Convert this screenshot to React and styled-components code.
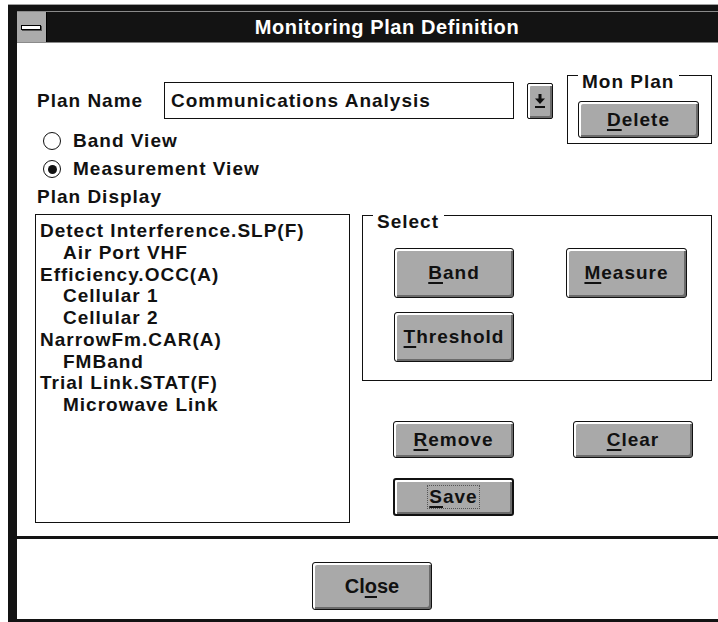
import React from "react";
import styled, { createGlobalStyle } from "styled-components";

const planLines = [
  { text: "Detect Interference.SLP(F)", child: false },
  { text: "Air Port VHF", child: true },
  { text: "Efficiency.OCC(A)", child: false },
  { text: "Cellular 1", child: true },
  { text: "Cellular 2", child: true },
  { text: "NarrowFm.CAR(A)", child: false },
  { text: "FMBand", child: true },
  { text: "Trial Link.STAT(F)", child: false },
  { text: "Microwave Link", child: true },
];

export default function App() {
  return (
    <>
      <GlobalStyle />
      <Window>
        <TitleBar>
          <SysMenu>
            <SysBar />
          </SysMenu>
          <Title>Monitoring Plan Definition</Title>
        </TitleBar>

        <Content>
          <TopSection>
            <LeftTop>
              <PlanNameRow>
                <Label>Plan Name</Label>
                <NameBox>Communications Analysis</NameBox>
                <DropButton>
                  <svg width="12" height="16" viewBox="0 0 12 16">
                    <rect x="4.5" y="1" width="3" height="5" fill="#111" />
                    <polygon points="1,5.5 11,5.5 6,11" fill="#111" />
                    <rect x="1" y="13" width="10" height="2" fill="#111" />
                  </svg>
                </DropButton>
              </PlanNameRow>
              <RadioList>
                <RadioRow>
                  <Radio />
                  Band View
                </RadioRow>
                <RadioRow>
                  <Radio $checked />
                  Measurement View
                </RadioRow>
              </RadioList>
              <SectionLabel>Plan Display</SectionLabel>
            </LeftTop>

            <MonPlanGroup>
              <Legend>Mon Plan</Legend>
              <Button $w={121} $h={37}>
                <u>D</u>elete
              </Button>
            </MonPlanGroup>
          </TopSection>

          <BottomSection>
            <ListBox>
              {planLines.map((line) => (
                <ListLine key={line.text} $child={line.child}>
                  {line.text}
                </ListLine>
              ))}
            </ListBox>

            <RightPanel>
              <SelectGroup>
                <Legend>Select</Legend>
                <Button $h={50}>
                  <u>B</u>and
                </Button>
                <Button $w={121} $h={50}>
                  <u>M</u>easure
                </Button>
                <Button $h={50}>
                  <u>T</u>hreshold
                </Button>
              </SelectGroup>

              <ActionGrid>
                <Button $w={121} $h={37}>
                  <u>R</u>emove
                </Button>
                <Button $h={37}>
                  <u>C</u>lear
                </Button>
                <Button $w={121} $h={38} $default>
                  <Focus>
                    <u>S</u>ave
                  </Focus>
                </Button>
              </ActionGrid>
            </RightPanel>
          </BottomSection>
        </Content>

        <Footer>
          <CloseButton>
            Cl<u>o</u>se
          </CloseButton>
        </Footer>
      </Window>
    </>
  );
}

const GlobalStyle = createGlobalStyle`
  html, body {
    margin: 0;
    padding: 0;
    background: #fff;
    overflow: hidden;
  }
  body {
    font-family: "Liberation Sans", Arial, sans-serif;
  }
`;

/* the dialog runs on past the right edge of the shot, so its right frame is not drawn */
const Window = styled.div`
  margin: 4px 0 0 8px;
  width: 701px;
  border-top: 1px solid #a0a0a0;
  background: #131313;
  padding: 6px 0 10px 9px;
`;

const TitleBar = styled.div`
  display: flex;
  height: 30px;
  border-top: 1px solid #8a8a8a;
  border-bottom: 1px solid #8a8a8a;
  background: #131313;
`;

const SysMenu = styled.div`
  width: 29px;
  flex: none;
  background: #ababab;
  border-right: 1px solid #000;
  display: flex;
  align-items: center;
  justify-content: center;
`;

const SysBar = styled.span`
  display: block;
  width: 18px;
  height: 3px;
  background: #fff;
  border: 1px solid #000;
  box-shadow: 1px 1px 0 #555;
  margin-left: -2px;
`;

const Title = styled.div`
  flex: 1;
  padding-left: 9px;
  text-align: center;
  color: #fff;
  font: bold 20px/30px "Liberation Sans", Arial, sans-serif;
  letter-spacing: 0.6px;
  white-space: nowrap;
`;

const Content = styled.main`
  height: 493px;
  box-sizing: border-box;
  padding: 0 6px 0 18px;
  background: #fff;
  color: #111;
  font: bold 19px/22px "Liberation Sans", Arial, sans-serif;
  letter-spacing: 1px;
  display: flex;
  flex-direction: column;
`;

const TopSection = styled.div`
  display: flex;
  justify-content: space-between;
  align-items: flex-start;
`;

const LeftTop = styled.div`
  display: flex;
  flex-direction: column;
  padding-top: 39px;
`;

const PlanNameRow = styled.div`
  display: flex;
  align-items: center;
  height: 37px;
`;

const Label = styled.span`
  width: 127px;
  margin-left: 2px;
  white-space: nowrap;
`;

const NameBox = styled.div`
  width: 350px;
  height: 37px;
  box-sizing: border-box;
  border: 1px solid #111;
  padding-left: 6px;
  display: flex;
  align-items: center;
  white-space: nowrap;
`;

const DropButton = styled.div`
  margin-left: 13px;
  width: 26px;
  height: 36px;
  box-sizing: border-box;
  border: 1px solid #111;
  border-radius: 2px;
  background: #a9a9a9;
  box-shadow: inset 2px 2px 0 #fff, inset -2px -2px 0 #6b6b6b;
  display: flex;
  align-items: center;
  justify-content: center;
`;

const RadioList = styled.div`
  margin-top: 8px;
  display: flex;
  flex-direction: column;
`;

const RadioRow = styled.div`
  height: 28px;
  display: flex;
  align-items: center;
  gap: 12px;
  padding-left: 8px;
  white-space: nowrap;
`;

const Radio = styled.span`
  width: 18px;
  height: 18px;
  box-sizing: border-box;
  border: 1.5px solid #111;
  border-radius: 50%;
  background: #fff;
  display: flex;
  align-items: center;
  justify-content: center;
  &::after {
    content: "";
    display: ${(p) => (p.$checked ? "block" : "none")};
    width: 9px;
    height: 9px;
    border-radius: 50%;
    background: #111;
  }
`;

const SectionLabel = styled.div`
  height: 28px;
  line-height: 28px;
  padding-left: 2px;
`;

const Group = styled.div`
  position: relative;
  box-sizing: border-box;
  border: 1px solid #111;
`;

const Legend = styled.span`
  position: absolute;
  top: -5px;
  left: 10px;
  padding: 0 5px 0 4px;
  background: #fff;
  line-height: 22px;
  white-space: nowrap;
`;

const MonPlanGroup = styled(Group)`
  margin-top: 32px;
  width: 145px;
  height: 69px;
  display: flex;
  align-items: flex-end;
  padding: 0 0 5px 10px;
`;

const Button = styled.button`
  width: ${(p) => p.$w || 120}px;
  height: ${(p) => p.$h || 37}px;
  box-sizing: border-box;
  padding: 0;
  border: ${(p) => (p.$default ? "2px" : "1px")} solid #111;
  border-radius: 3px;
  background: #a9a9a9;
  box-shadow: inset 2px 2px 0 #fff, inset -2px -2px 0 #6b6b6b;
  color: #111;
  font: bold 19px/22px "Liberation Sans", Arial, sans-serif;
  letter-spacing: 1px;
  display: flex;
  align-items: center;
  justify-content: center;

  u {
    text-decoration-thickness: 2px;
    text-underline-offset: 3px;
  }
`;

const Focus = styled.span`
  outline: 1px dotted #555;
  padding: 0 1px;
`;

const BottomSection = styled.div`
  margin-top: 3px;
  display: flex;
  align-items: flex-start;
`;

const ListBox = styled.div`
  width: 315px;
  height: 309px;
  box-sizing: border-box;
  border: 1px solid #111;
  padding: 5px 4px;
  line-height: 21.75px;
`;

const ListLine = styled.div`
  padding-left: ${(p) => (p.$child ? 23 : 0)}px;
  white-space: nowrap;
`;

const RightPanel = styled.div`
  margin: 1px 0 0 12px;
  width: 350px;
  display: flex;
  flex-direction: column;
`;

const SelectGroup = styled(Group)`
  height: 166px;
  padding: 32px 0 0 31px;
  display: grid;
  grid-template-columns: 120px 121px;
  grid-auto-rows: max-content;
  column-gap: 52px;
  row-gap: 14px;
`;

const ActionGrid = styled.div`
  margin-top: 40px;
  padding-left: 31px;
  display: grid;
  grid-template-columns: 121px 120px;
  column-gap: 59px;
  row-gap: 20px;
`;

const Footer = styled.footer`
  height: 83px;
  box-sizing: border-box;
  border-top: 3px solid #131313;
  padding: 23px 0 0 9px;
  background: #fff;
  display: flex;
  justify-content: center;
  align-items: flex-start;
`;

const CloseButton = styled(Button)`
  width: 120px;
  height: 48px;
  font: bold 20px/22px "Liberation Sans", Arial, sans-serif;
  letter-spacing: 0;
`;
